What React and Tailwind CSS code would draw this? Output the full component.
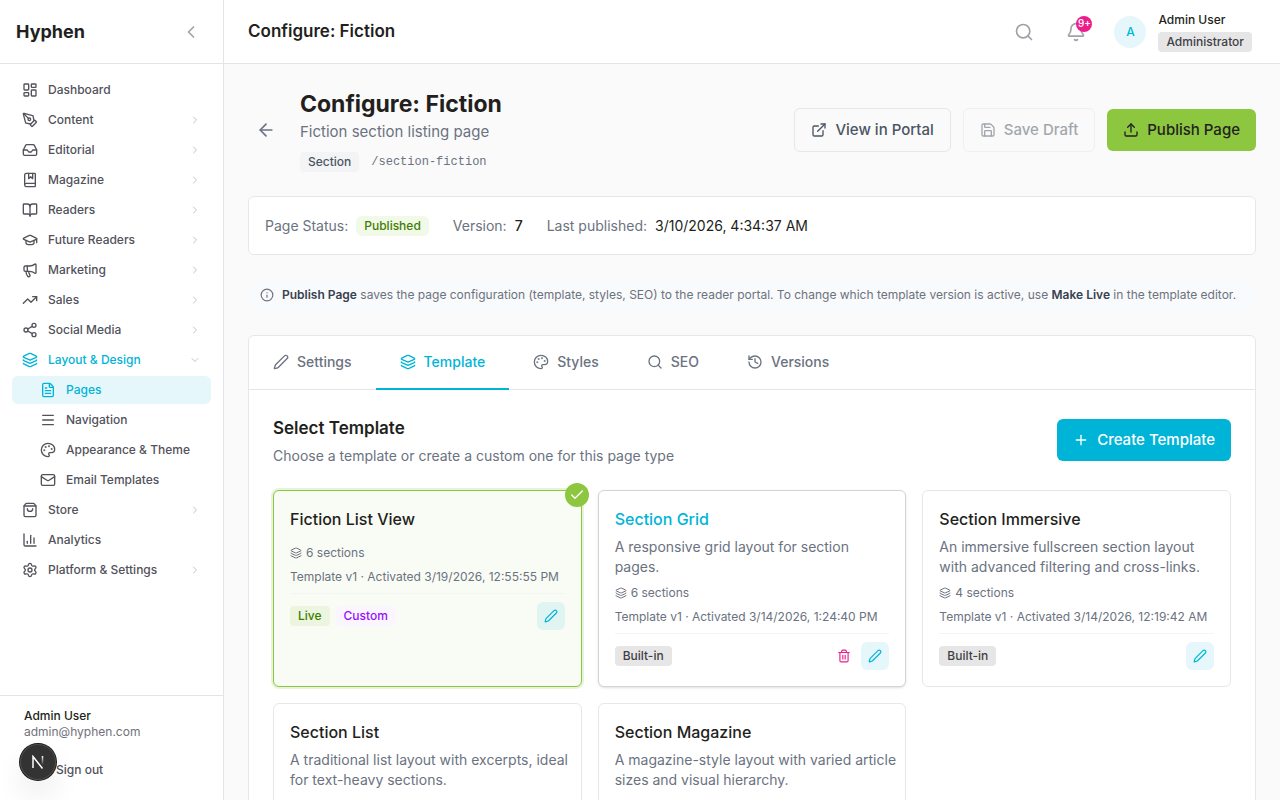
import React, { useState } from 'react';
import {
  ArrowLeft,
  Bell,
  BookMarked,
  BookOpen,
  ChartColumn,
  Check,
  ChevronDown,
  ChevronLeft,
  ChevronRight,
  ExternalLink,
  FileText,
  GraduationCap,
  History,
  Inbox,
  Info,
  Layers,
  LayoutDashboard,
  LogOut,
  Mail,
  Megaphone,
  Menu,
  Palette,
  Pen,
  PenTool,
  Plus,
  Save,
  Search,
  Settings,
  Share2,
  ShoppingBag,
  Trash2,
  TrendingUp,
  Upload,
} from 'lucide-react';

const navItems = [
  { name: 'Dashboard', icon: LayoutDashboard },
  { name: 'Content', icon: PenTool, expandable: true },
  { name: 'Editorial', icon: Inbox, expandable: true },
  { name: 'Magazine', icon: BookMarked, expandable: true },
  { name: 'Readers', icon: BookOpen, expandable: true },
  { name: 'Future Readers', icon: GraduationCap, expandable: true },
  { name: 'Marketing', icon: Megaphone, expandable: true },
  { name: 'Sales', icon: TrendingUp, expandable: true },
  { name: 'Social Media', icon: Share2, expandable: true },
  {
    name: 'Layout & Design',
    icon: Layers,
    expandable: true,
    open: true,
    children: [
      { name: 'Pages', icon: FileText, active: true },
      { name: 'Navigation', icon: Menu },
      { name: 'Appearance & Theme', icon: Palette },
      { name: 'Email Templates', icon: Mail },
    ],
  },
  { name: 'Store', icon: ShoppingBag, expandable: true },
  { name: 'Analytics', icon: ChartColumn },
  { name: 'Platform & Settings', icon: Settings, expandable: true },
];

const tabs = [
  { id: 'settings', label: 'Settings', icon: Pen },
  { id: 'template', label: 'Template', icon: Layers },
  { id: 'styles', label: 'Styles', icon: Palette },
  { id: 'seo', label: 'SEO', icon: Search },
  { id: 'versions', label: 'Versions', icon: History },
];

const templates = [
  {
    id: 1,
    name: 'Fiction List View',
    sections: 6,
    activated: '3/19/2026, 12:55:55 PM',
    selected: true,
    custom: true,
  },
  {
    id: 2,
    name: 'Section Grid',
    description: 'A responsive grid layout for section\npages.',
    sections: 6,
    activated: '3/14/2026, 1:24:40 PM',
    hovered: true,
  },
  {
    id: 3,
    name: 'Section Immersive',
    description: 'An immersive fullscreen section layout\nwith advanced filtering and cross-links.',
    sections: 4,
    activated: '3/14/2026, 12:19:42 AM',
  },
  {
    id: 4,
    name: 'Section List',
    description: 'A traditional list layout with excerpts, ideal\nfor text-heavy sections.',
    sections: 5,
    activated: '3/14/2026, 12:19:42 AM',
  },
  {
    id: 5,
    name: 'Section Magazine',
    description: 'A magazine-style layout with varied article\nsizes and visual hierarchy.',
    sections: 6,
    activated: '3/14/2026, 12:19:42 AM',
  },
];

const NavItem = ({ item }) => {
  const Icon = item.icon;
  const Chevron = item.open ? ChevronDown : ChevronRight;

  return (
    <li>
      <a
        href="#"
        className={`flex h-7 items-center gap-2.5 rounded-md px-2.5 text-xs font-medium ${
          item.open ? 'text-[#00b4d8]' : 'text-[#52525b]'
        }`}
      >
        <Icon size={16} />
        <span className="flex-1">{item.name}</span>
        {item.expandable && <Chevron size={12} className="text-[#c4c4c9]" />}
      </a>
      {item.children && (
        <ul className="mt-0.5 space-y-0.5">
          {item.children.map((child) => (
            <li key={child.name}>
              <a
                href="#"
                className={`flex h-7 items-center gap-2.5 rounded-md pl-7 pr-2.5 text-xs font-medium ${
                  child.active ? 'bg-[#e5f7fb] text-[#00b4d8]' : 'text-[#52525b]'
                }`}
              >
                <child.icon size={16} />
                <span>{child.name}</span>
              </a>
            </li>
          ))}
        </ul>
      )}
    </li>
  );
};

const Sidebar = () => (
  <aside className="sticky top-0 flex h-screen w-56 shrink-0 flex-col border-r border-[#e4e4e7] bg-white">
    <div className="flex h-16 shrink-0 items-center justify-between border-b border-[#e4e4e7] px-4">
      <span className="text-lg font-bold text-[#231f20]">Hyphen</span>
      <button type="button" aria-label="Collapse sidebar" className="p-1.5 text-[#a1a1aa]">
        <ChevronLeft size={20} />
      </button>
    </div>
    <nav className="flex-1 overflow-hidden p-3">
      <ul className="space-y-0.5">
        {navItems.map((item) => (
          <NavItem key={item.name} item={item} />
        ))}
      </ul>
    </nav>
    <div className="border-t border-[#e4e4e7] p-3">
      <div className="mb-3 px-3 text-xs">
        <p className="font-medium text-[#231f20]">Admin User</p>
        <p className="text-[#71717a]">admin@hyphen.com</p>
      </div>
      <button type="button" className="flex h-9 w-full items-center gap-4 px-3 text-xs font-medium text-[#52525b]">
        <LogOut size={16} />
        Sign out
      </button>
    </div>
  </aside>
);

const Header = () => (
  <header className="flex h-16 items-center justify-between border-b border-[#e4e4e7] bg-white pl-6 pr-7">
    <h2 className="text-[17px] font-semibold text-[#231f20]">Configure: Fiction</h2>
    <div className="flex items-center">
      <button type="button" aria-label="Search" className="mr-8 text-[#a1a1aa]">
        <Search size={20} />
      </button>
      <button type="button" aria-label="Notifications" className="relative mr-7 text-[#a1a1aa]">
        <Bell size={20} />
        <span className="absolute -right-1.5 -top-1.5 flex size-4 items-center justify-center rounded-full bg-[#ed1e8c] text-[10px] font-medium text-white">
          9+
        </span>
      </button>
      <div className="mr-3 flex size-8 items-center justify-center rounded-full bg-[#e5f7fb] text-xs font-medium text-[#00b4d8]">
        A
      </div>
      <div className="flex flex-col items-start gap-1 text-xs font-medium">
        <span className="text-[#231f20]">Admin User</span>
        <span className="rounded bg-[#e6e6e6] px-2 py-0.5 text-[#3f3f46]">Administrator</span>
      </div>
    </div>
  </header>
);

const PageHeading = () => (
  <div className="flex items-center justify-between">
    <div className="flex items-center gap-4">
      <button type="button" aria-label="Back to pages" className="p-2 text-[#6b7280]">
        <ArrowLeft size={20} />
      </button>
      <div>
        <h1 className="text-[23px] font-bold leading-8 text-[#231f20]">Configure: Fiction</h1>
        <p className="text-[15px] leading-6 text-[#6b7280]">Fiction section listing page</p>
        <div className="mt-2 flex items-center gap-3 text-xs">
          <span className="rounded bg-gray-100 px-2 py-0.5 font-medium text-[#4b5563]">Section</span>
          <span className="font-['Liberation_Mono',monospace] text-[#6b7280]">/section-fiction</span>
        </div>
      </div>
    </div>
    <div className="flex items-center gap-3">
      <button
        type="button"
        className="flex h-11 items-center gap-2 rounded-md border border-[#e5e7eb] px-4 text-[15px] font-medium text-[#4b5563]"
      >
        <ExternalLink size={16} />
        View in Portal
      </button>
      <button
        type="button"
        disabled
        className="flex h-11 items-center gap-2 rounded-md border border-[#e5e7eb] px-4 text-[15px] font-medium text-[#4b5563] opacity-50"
      >
        <Save size={16} />
        Save Draft
      </button>
      <button
        type="button"
        className="flex h-[42px] items-center gap-2 rounded-md bg-[#8dc63f] px-4 text-[15px] font-medium text-[#231f20]"
      >
        <Upload size={16} />
        Publish Page
      </button>
    </div>
  </div>
);

const StatusCard = () => (
  <div className="flex items-center gap-6 rounded-md border border-[#e5e7eb] bg-white px-4 py-[18px] text-sm leading-[21px]">
    <div className="flex items-center gap-2">
      <span className="text-[#6b7280]">Page Status:</span>
      <span className="rounded-md bg-[#f1f9e8] px-2 py-px text-xs font-medium leading-[18px] text-[#3f7d00]">
        Published
      </span>
    </div>
    <div className="flex items-center gap-2">
      <span className="text-[#6b7280]">Version:</span>
      <span className="font-medium text-[#231f20]">7</span>
    </div>
    <div className="flex items-center gap-2">
      <span className="text-[#6b7280]">Last published:</span>
      <span className="text-[#231f20]">3/10/2026, 4:34:37 AM</span>
    </div>
  </div>
);

const TemplateCard = ({ template }) => {
  let frame = 'border-[#e5e7eb] bg-white';
  if (template.selected) {
    frame = 'border-[#8dc63f] bg-[#f9fcf5] ring-2 ring-[#8dc63f]/20';
  } else if (template.hovered) {
    frame = 'border-[#d1d5db] bg-white shadow-sm';
  }

  return (
    <article className={`relative flex flex-col rounded-md border p-4 ${frame}`}>
      {template.selected && (
        <span className="absolute -right-2 -top-2 flex size-6 items-center justify-center rounded-full bg-[#8dc63f] text-white">
          <Check size={16} />
        </span>
      )}
      <h4 className={`mb-1.5 font-medium ${template.hovered ? 'text-[#00b4d8]' : 'text-[#231f20]'}`}>
        {template.name}
      </h4>
      <p className="-mr-2 mb-2 whitespace-pre-line text-sm text-[#6b7280]">{template.description}</p>
      <div className="mb-2 flex items-center gap-1 text-xs text-[#6b7280]">
        <Layers size={12} />
        {template.sections} sections
      </div>
      <p className="mb-2 text-xs text-[#6b7280]">
        Template v1 · Activated {template.activated}
      </p>
      <div className="flex items-center justify-between border-t border-[#f3f4f6] pt-2 text-xs font-medium">
        {template.custom ? (
          <div className="flex gap-1.5">
            <span className="rounded bg-[#8dc63f]/12 px-2 py-0.5 text-[#3f7d00]">Live</span>
            <span className="rounded bg-purple-50 px-2 py-0.5 text-purple-600">Custom</span>
          </div>
        ) : (
          <span className="rounded bg-[#e6e6e6] px-2 py-0.5 text-[#3f3f46]">Built-in</span>
        )}
        <div className="flex items-center gap-1">
          {template.hovered && (
            <button type="button" aria-label="Delete template" className="p-1.5 text-[#ed1e8c]">
              <Trash2 size={14} />
            </button>
          )}
          <button
            type="button"
            aria-label="Edit template"
            className="flex size-7 items-center justify-center rounded-md bg-[#00b4d8]/10 text-[#00b4d8]"
          >
            <Pen size={14} />
          </button>
        </div>
      </div>
    </article>
  );
};

const App = () => {
  const [activeTab, setActiveTab] = useState('template');

  return (
    <div className="flex min-h-screen bg-[#fafafa] font-['Inter',sans-serif] text-[#231f20]">
      <Sidebar />
      <div className="flex min-w-0 flex-1 flex-col">
        <Header />
        <main className="flex-1 space-y-6 p-6">
          <PageHeading />
          <StatusCard />
          <div className="flex items-center gap-2 rounded-md bg-[#f9fafb] px-3 py-2 text-xs text-[#6b7280]">
            <Info size={14} />
            <p>
              <strong className="font-semibold text-[#374151]">Publish Page</strong> saves the page configuration
              (template, styles, SEO) to the reader portal. To change which template version is active, use{' '}
              <strong className="font-semibold text-[#374151]">Make Live</strong> in the template editor.
            </p>
          </div>

          <div className="rounded-md border border-[#e5e7eb] bg-white">
            <div className="flex border-b border-[#e5e7eb]">
              {tabs.map((tab) => (
                <button
                  key={tab.id}
                  type="button"
                  onClick={() => setActiveTab(tab.id)}
                  className={`-mb-px flex items-center gap-2 border-b-2 px-6 py-4 text-sm font-medium ${
                    activeTab === tab.id ? 'border-[#00b4d8] text-[#00b4d8]' : 'border-transparent text-[#6b7280]'
                  }`}
                >
                  <tab.icon size={16} />
                  {tab.label}
                </button>
              ))}
            </div>

            <div className="p-6">
              <div className="mb-6 flex items-center justify-between">
                <div>
                  <h3 className="text-[17px] font-semibold leading-7">Select Template</h3>
                  <p className="mt-1 text-sm text-[#6b7280]">
                    Choose a template or create a custom one for this page type
                  </p>
                </div>
                <button
                  type="button"
                  className="flex h-[42px] items-center gap-2 rounded-md bg-[#00b4d8] px-4 text-[15px] font-medium text-white"
                >
                  <Plus size={16} />
                  Create Template
                </button>
              </div>
              <div className="grid grid-cols-3 gap-4">
                {templates.map((template) => (
                  <TemplateCard key={template.id} template={template} />
                ))}
              </div>
            </div>
          </div>
        </main>
      </div>

      <button
        type="button"
        aria-label="Open dev tools"
        className="fixed bottom-5 left-5 flex size-9 items-center justify-center rounded-full bg-[#333333] shadow-[0_0_0_1px_#171717,inset_0_0_0_1px_#4d4d4d,0_16px_32px_-8px_rgba(0,0,0,0.24)]"
      >
        <svg width="14" height="14" viewBox="0 0 14 14" fill="none">
          <defs>
            <linearGradient id="stem" x1="12" y1="1" x2="12" y2="10" gradientUnits="userSpaceOnUse">
              <stop stopColor="#fff" />
              <stop offset="1" stopColor="#fff" stopOpacity="0" />
            </linearGradient>
          </defs>
          <path d="M2 13V1.5L11.5 13.5" stroke="#fff" strokeWidth="1.5" />
          <path d="M11.5 1v9" stroke="url(#stem)" strokeWidth="1.5" />
        </svg>
      </button>
    </div>
  );
};

export default App;
